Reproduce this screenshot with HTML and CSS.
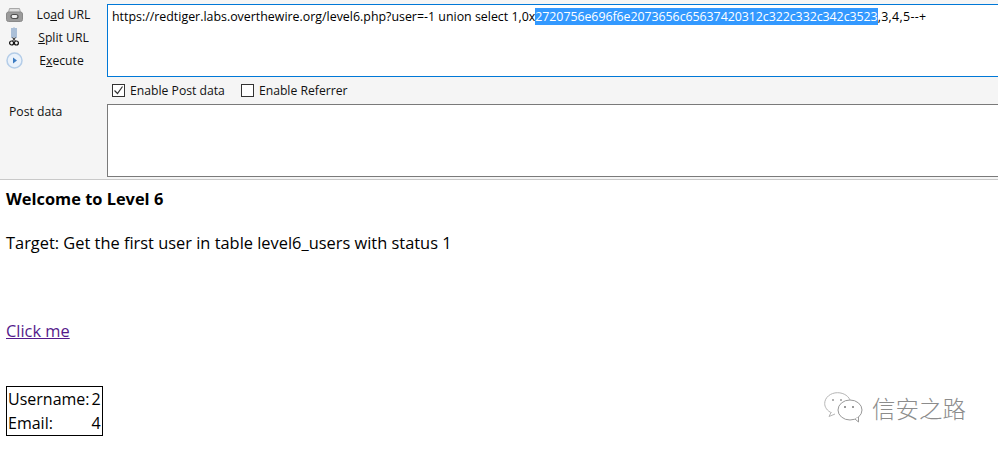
FILE: index.html
```html
<!DOCTYPE html>
<html lang="en">
<head>
<meta charset="utf-8">
<title>Level 6</title>
<link rel="stylesheet" href="styles.css">
</head>
<body>
<div class="hackbar">
  <div class="actions">
    <div class="action">
      <svg class="icon icon-load" width="17" height="14" viewBox="0 0 17 14"><path d="M3.5 .5h10l1 4h-12z" fill="#dcdcdc" stroke="#a8a8a8"/><rect x=".5" y="4" width="16" height="9.5" rx="2" fill="#9b9b9b" stroke="#8a8a8a"/><rect x="5" y="6.5" width="7" height="4" rx="2" fill="#eee" stroke="#4d4d4d" stroke-width="1.2"/></svg>
      <span class="action-label label-load">Lo<u>a</u>d URL</span>
    </div>
    <div class="action">
      <svg class="icon icon-split" width="10" height="19" viewBox="0 0 10 19"><path d="M3 1v10M5 .5v10M7 1v10" stroke="#6d93bf" stroke-width="1.1" fill="none"/><path d="M3.5 10.5l3 3.5M6.5 10.5l-3 3.5" stroke="#333" stroke-width="1.1"/><circle cx="2.6" cy="16" r="2" fill="none" stroke="#111" stroke-width="1.2"/><circle cx="7.4" cy="16" r="2" fill="none" stroke="#111" stroke-width="1.2"/></svg>
      <span class="action-label label-split"><u>S</u>plit URL</span>
    </div>
    <div class="action">
      <svg class="icon icon-exec" width="17" height="17" viewBox="0 0 17 17"><circle cx="8.5" cy="8.5" r="7.5" fill="#eaf2fb" stroke="#b4cde8" stroke-width="1.5"/><path d="M7 5.5l4 3-4 3z" fill="#3d7cc2"/></svg>
      <span class="action-label label-exec">E<u>x</u>ecute</span>
    </div>
  </div>
  <div class="fields">
    <div class="url-box">https://redtiger.labs.overthewire.org/level6.php?user=-1 union select 1,0x<span class="sel">2720756e696f6e2073656c65637420312c322c332c342c3523</span><span class="tail">,3,4,5--+</span></div>
    <div class="options">
      <span class="option"><span class="check"><svg width="11" height="11" viewBox="0 0 11 11"><path d="M1.5 5.5l3 3 5-7" fill="none" stroke="#333" stroke-width="1.2"/></svg></span>Enable Post data</span>
      <span class="option"><span class="check"></span>Enable Referrer</span>
    </div>
    <div class="post-row">
      <div class="post-label">Post data</div>
      <div class="post-box"></div>
    </div>
  </div>
</div>
<main class="content">
  <p class="welcome">Welcome to Level 6</p>
  <p class="target">Target: Get the first user in table level6_users with status 1</p>
  <p class="click"><a href="#">Click me</a></p>
  <table class="result">
    <tr><td>Username:</td><td>2</td></tr>
    <tr><td>Email:</td><td>4</td></tr>
  </table>
</main>
<div class="watermark">
  <svg width="39" height="32" viewBox="0 0 39 32"><path d="M8 21C3 19 .7 15 .7 11.500 .7 5.500 6.500 .7 13.500 .7c6.500 0 12 3.800 13 9" fill="#fff" stroke="#b5b5b5"/><path d="M7 20.500l-2 4 6-2.500" fill="#fff" stroke="#b5b5b5"/><ellipse cx="26" cy="18" rx="12" ry="10" fill="#fff" stroke="#999"/><path d="M31 27l3.500 3v-5" fill="#fff" stroke="#999"/><circle cx="9" cy="8" r="1" fill="#999"/><circle cx="17" cy="8" r="1" fill="#999"/><circle cx="21" cy="15" r="1" fill="#777"/><circle cx="29" cy="15" r="1" fill="#777"/></svg>
  <span class="wm-text">信安之路</span>
</div>
</body>
</html>
```
FILE: styles.css
```css
html, body { margin: 0; padding: 0; background: #fff; }
body { width: 998px; height: 451px; overflow: hidden; position: relative; font-family: "Open Sans", "Noto Sans", "Liberation Sans", sans-serif; color: #000; }
.hackbar { display: flex; height: 179px; background: #f5f5f5; border-bottom: 1px solid #c9c9c9; font-size: 12.2px; color: #111; }
.actions { width: 107px; flex: none; display: flex; flex-direction: column; padding-top: 4px; gap: 1px; }
.action { height: 22px; position: relative; display: flex; justify-content: center; align-items: center; }
.icon { position: absolute; }
.icon-load { left: 6px; top: 4px; }
.icon-split { left: 9px; top: 0; }
.icon-exec { left: 6px; top: 2px; }
.action-label { line-height: 20px; }
.label-load { margin-left: 20px; }
.label-split { margin-left: 20px; }
.label-exec { margin-left: 16px; }
.fields { flex: 1; min-width: 0; padding-top: 4px; }
.url-box { height: 67px; background: #fff; border: 1px solid #0078d7; border-right: 0; padding: 4px 0 0 4px; font-size: 12.4px; line-height: 15px; white-space: nowrap; color: #000; }
.sel { background: #3399ff; color: #fff; letter-spacing: -0.06px; }
.tail { letter-spacing: 0.33px; }
.options { display: flex; gap: 16px; height: 27px; align-items: center; padding-left: 5px; }
.option { display: flex; align-items: center; gap: 5px; }
.check { width: 11px; height: 11px; border: 1px solid #333; background: #fff; display: flex; }
.post-row { position: relative; }
.post-label { position: absolute; left: -98px; top: 0; line-height: 16px; }
.post-box { height: 71px; background: #fff; border: 1px solid #7a7a7a; border-right: 0; }
.content { padding: 0 6px; font-size: 16.4px; line-height: 23px; }
.content p { margin: 0; }
.welcome { font-weight: 700; padding-top: 7px; }
.target { padding-top: 21px; }
.click { padding-top: 65px; }
.click a { color: #551a8b; }
.result { border: 1px solid #000; border-collapse: separate; border-spacing: 0; margin-top: 44px; font-size: 16px; }
.result td { padding: 0 1px; line-height: 24px; height: 24px; }
.result td:last-child { text-align: right; }
.watermark { position: absolute; left: 824px; top: 391px; display: flex; align-items: center; gap: 9px; }
.wm-text { font-family: "Noto Sans CJK SC", sans-serif; font-size: 23.5px; font-weight: 300; color: #8c8c8c; }
```
